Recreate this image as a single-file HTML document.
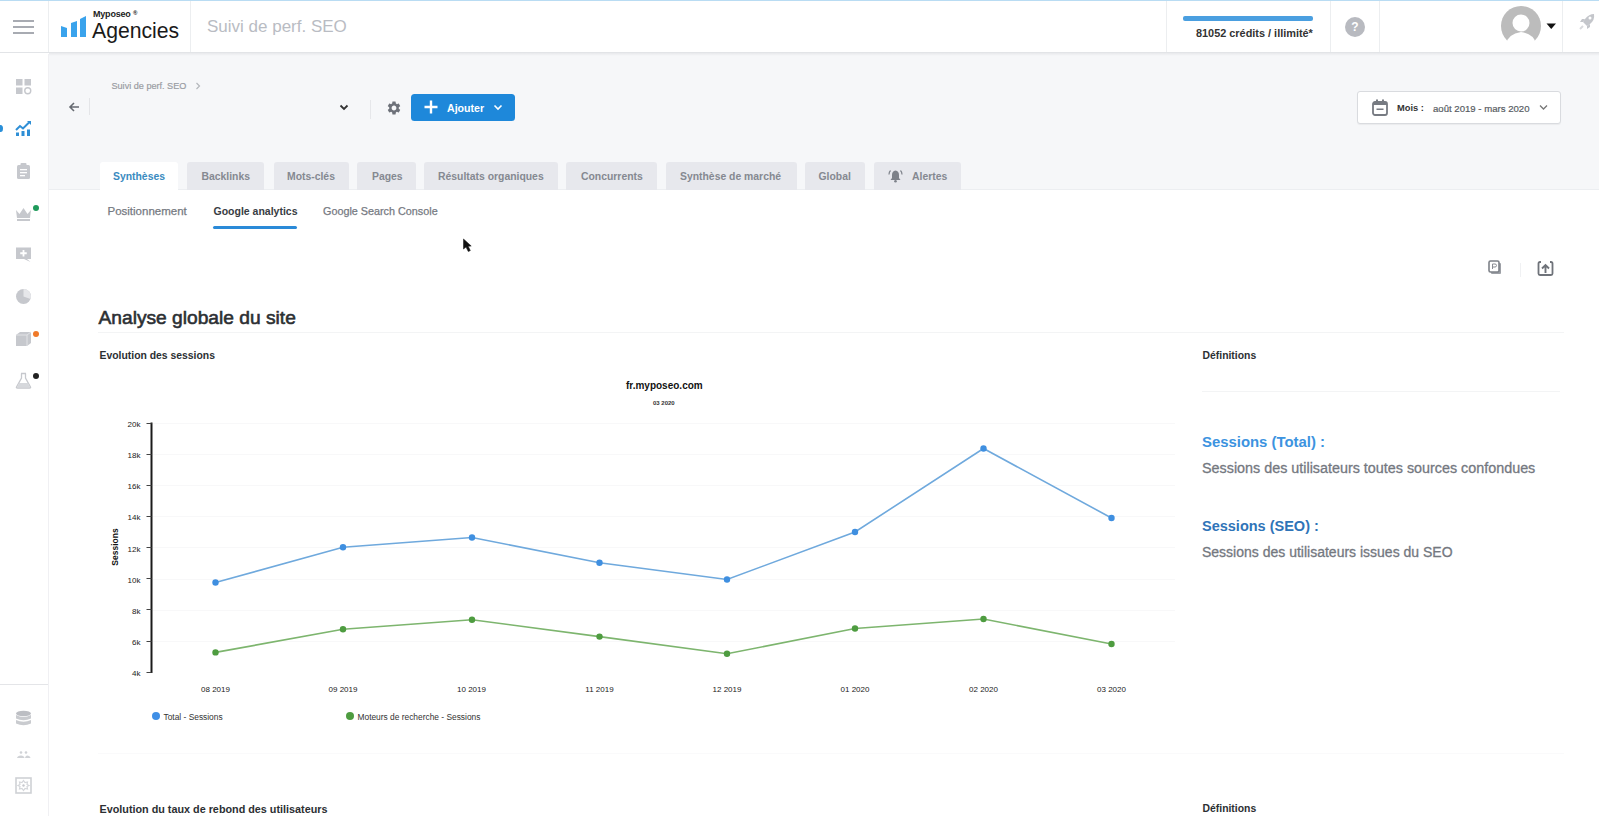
<!DOCTYPE html>
<html><head><meta charset="utf-8">
<style>
*{box-sizing:border-box;margin:0;padding:0}
html,body{width:1599px;height:816px;overflow:hidden;background:#fff;font-family:"Liberation Sans",sans-serif;color:#333}
.a{position:absolute}
.t{position:absolute;white-space:nowrap;line-height:1}
.b{font-weight:bold}
.vl{position:absolute;width:1px;background:#eceef0}
.tab{position:absolute;top:162px;height:28px;background:#e7e8ed;border-radius:3px 3px 0 0}
.tabt{position:absolute;top:172px;white-space:nowrap;line-height:1;font-size:10.4px;font-weight:bold;color:#858991}
.si{position:absolute;left:15px;width:17px;height:17px}
#wrap{position:absolute;left:0;top:0;width:1599px;height:816px;overflow:hidden}
</style></head><body><div id="wrap">
<!-- backgrounds -->
<div class="a" style="left:0;top:0;width:1599px;height:1px;background:#b9dcf3"></div>
<div class="a" style="left:0;top:1px;width:1599px;height:51px;background:#fff"></div>
<div class="a" style="left:0;top:52px;width:1599px;height:1px;background:#e2e4e7"></div>
<div class="a" style="left:0;top:54px;width:48px;height:762px;background:#fff"></div>
<div class="a" style="left:48px;top:54px;width:1px;height:762px;background:#f0f0f3"></div>
<div class="a" style="left:49px;top:54px;width:1550px;height:136px;background:#f6f7f9"></div>
<div class="a" style="left:49px;top:189px;width:1550px;height:1px;background:#eceef1"></div>
<div class="a" style="left:49px;top:53px;width:1550px;height:3px;background:linear-gradient(#e8e9ec,#f6f7f9)"></div>

<!-- header -->
<div class="a" style="left:13px;top:20px;width:21px;height:2px;background:#a8abb2"></div>
<div class="a" style="left:13px;top:26px;width:21px;height:2px;background:#a8abb2"></div>
<div class="a" style="left:13px;top:32px;width:21px;height:2px;background:#a8abb2"></div>
<div class="vl" style="left:48px;top:1px;height:51px"></div>
<div class="vl" style="left:190px;top:1px;height:51px"></div>
<svg class="a" style="left:60px;top:15px" width="28" height="23" viewBox="0 0 28 23">
<path d="M1 11 L7 13 L7 22 L1 22Z" fill="#3aa3ec"/>
<path d="M11 8 L17 6 L17 22 L11 22Z" fill="#3aa3ec"/>
<path d="M20 4 L26 1 L26 22 L20 22Z" fill="#3aa3ec"/>
</svg>
<div class="t" style="left:93px;top:10px;font-size:9px;color:#222;font-weight:bold;letter-spacing:-0.2px">Myposeo <span style="font-size:6px;vertical-align:top">®</span></div>
<div class="t" style="left:92px;top:19.5px;font-size:21.2px;color:#1a1a1a;letter-spacing:0px">Agencies</div>
<div class="t" style="left:207px;top:17.5px;font-size:17px;color:#b9bcc3">Suivi de perf. SEO</div>

<div class="vl" style="left:1166px;top:1px;height:51px"></div>
<div class="vl" style="left:1330px;top:1px;height:51px"></div>
<div class="vl" style="left:1379px;top:1px;height:51px"></div>
<div class="vl" style="left:1562px;top:1px;height:51px"></div>
<div class="a" style="left:1183px;top:16px;width:130px;height:4.5px;background:#4a9fe0;border-radius:2px"></div>
<div class="t b" style="left:1196px;top:28.3px;font-size:10.9px;color:#333">81052 crédits / illimité*</div>
<div class="a" style="left:1345px;top:16.5px;width:20px;height:20px;border-radius:50%;background:#b8bac0;color:#fff;font-size:12px;font-weight:bold;text-align:center;line-height:20px">?</div>
<svg class="a" style="left:1500px;top:6px" width="44" height="38" viewBox="0 0 44 38">
<defs><clipPath id="cc"><circle cx="21" cy="20" r="20"/></clipPath></defs>
<g clip-path="url(#cc)">
<rect x="0" y="0" width="44" height="35" fill="#bcbcbc"/>
<circle cx="21" cy="17" r="8.5" fill="#fff"/>
<path d="M6 38 Q8 28 21 26 Q34 28 36 38Z" fill="#fff"/>
</g>
</svg>
<svg class="a" style="left:1546px;top:23px" width="11" height="7" viewBox="0 0 11 7"><path d="M0.5 0.5 L10 0.5 L5.25 6Z" fill="#111"/></svg>
<svg class="a" style="left:1577px;top:12px" width="20" height="20" viewBox="0 0 20 20">
<path d="M17 2 Q12 2 8 7 L6 10 L10 14 L13 12 Q18 8 17 2Z" fill="#c4c6cb"/>
<path d="M6 10 L3 10 L5 7 L8 7Z M10 14 L10 17 L13 15 L13 12Z" fill="#c4c6cb"/>
<circle cx="13" cy="6" r="1.5" fill="#fff"/>
<path d="M3 17 L6 14" stroke="#d8dadd" stroke-width="2"/>
</svg>

<!-- sidebar icons -->
<div class="a" style="left:-2px;top:125px;width:5px;height:7px;border-radius:50%;background:#2a8fd8"></div>
<svg class="si" style="top:78px" viewBox="0 0 17 17"><rect x="1" y="1" width="6.5" height="6.5" fill="#c6c8cd"/><rect x="9.5" y="1" width="6.5" height="6.5" fill="#c6c8cd"/><rect x="1" y="9.5" width="6.5" height="6.5" fill="#c6c8cd"/><circle cx="12.75" cy="12.75" r="3" fill="none" stroke="#c6c8cd" stroke-width="1.4"/></svg>
<svg class="si" style="top:120px" viewBox="0 0 17 17"><path d="M1 10 L5 6 L8 8.5 L14 2.5" stroke="#2f8fd6" stroke-width="2" fill="none"/><path d="M12 1 L16 1 L16 5Z" fill="#2f8fd6"/><rect x="1" y="12.5" width="3" height="3.5" fill="#2f8fd6"/><rect x="6.5" y="11" width="3" height="5" fill="#2f8fd6"/><rect x="12" y="9.5" width="3" height="6.5" fill="#2f8fd6"/></svg>
<svg class="si" style="top:162px" viewBox="0 0 17 17"><rect x="2" y="3" width="13" height="14" rx="1.5" fill="#c6c8cd"/><rect x="5.5" y="1" width="6" height="4" rx="1" fill="#c6c8cd"/><rect x="5" y="7" width="7" height="1.3" fill="#fff"/><rect x="5" y="10" width="7" height="1.3" fill="#fff"/><rect x="5" y="13" width="5" height="1.3" fill="#fff"/></svg>
<svg class="si" style="top:205px" viewBox="0 0 17 17"><path d="M1 5 L4.5 9 L8.5 3 L12.5 9 L16 5 L15 13 L2 13Z" fill="#c6c8cd"/><rect x="2" y="14" width="13" height="2" fill="#c6c8cd"/></svg>
<div class="a" style="left:33px;top:204.5px;width:6px;height:6px;border-radius:50%;background:#1f9a5b"></div>
<svg class="si" style="top:246px" viewBox="0 0 17 17"><path d="M1 1.5 H16 V13 H12 L15.5 16 L9 13 H1Z" fill="#c6c8cd"/><path d="M8.5 4 V10.5 M5.25 7.25 H11.75" stroke="#fff" stroke-width="1.8"/></svg>
<svg class="si" style="top:288px" viewBox="0 0 17 17"><circle cx="8.5" cy="8.5" r="7.5" fill="#c6c8cd"/><path d="M8.5 8.5 L8.5 1 A7.5 7.5 0 0 1 15.5 11Z" fill="#e6e7ea"/></svg>
<svg class="si" style="top:330px" viewBox="0 0 17 17"><path d="M1 5 L5 2 L16 2 L16 13 L12 16 L1 16Z" fill="#c6c8cd"/><path d="M1 5 L12 5 L16 2 M12 5 V16" stroke="#e2e3e6" stroke-width="1" fill="none"/></svg>
<div class="a" style="left:33px;top:330.5px;width:6px;height:6px;border-radius:50%;background:#f07a2a"></div>
<svg class="si" style="top:372px" viewBox="0 0 17 17"><path d="M6 1.5 H11 M6.5 1.5 V6 L1.5 15 Q1 16 2.5 16 H14.5 Q16 16 15.5 15 L10.5 6 V1.5" stroke="#c6c8cd" stroke-width="1.3" fill="none"/><path d="M4 11 H13 L15 15 H2Z" fill="#d6d8dc"/></svg>
<div class="a" style="left:33px;top:373px;width:6px;height:6px;border-radius:50%;background:#222"></div>
<div class="a" style="left:0;top:684px;width:48px;height:1px;background:#e4e5e8"></div>
<svg class="si" style="top:710px" viewBox="0 0 17 17"><ellipse cx="8.5" cy="3.5" rx="7.5" ry="2.8" fill="#bcbec3"/><path d="M1 5 Q8.5 9 16 5 V8.5 Q8.5 12 1 8.5Z" fill="#c9cbcf"/><path d="M1 10 Q8.5 13.5 16 10 V13.5 Q8.5 17 1 13.5Z" fill="#c9cbcf"/></svg>
<svg class="si" style="top:746px" viewBox="0 0 17 14"><circle cx="6" cy="5" r="1.3" fill="#d0d2d6"/><circle cx="11" cy="5" r="1.3" fill="#d0d2d6"/><path d="M2 10.5 Q2.5 8 6 8 Q9 8 9.5 10.5Z M10 10.5 Q10.5 8 12 8 Q15 8 15.5 10.5Z" fill="#d0d2d6"/></svg>
<svg class="si" style="top:776.5px" viewBox="0 0 17 17"><rect x="1" y="1" width="15" height="15" fill="none" stroke="#cfd1d5" stroke-width="1.6"/><path d="M8.5 3.5 L10 5.5 L12.5 5 L12 7.5 L14 8.5 L12 9.5 L12.5 12 L10 11.5 L8.5 13.5 L7 11.5 L4.5 12 L5 9.5 L3 8.5 L5 7.5 L4.5 5 L7 5.5Z" fill="none" stroke="#d4d6da" stroke-width="1.2"/><circle cx="8.5" cy="8.5" r="1.2" fill="#c6c8cd"/></svg>

<!-- toolbar -->
<div class="t" style="left:111.5px;top:82.3px;font-size:9.1px;color:#9a9da3;-webkit-text-stroke:0.2px #9a9da3">Suivi de perf. SEO</div>
<svg class="a" style="left:195px;top:82px" width="6" height="8" viewBox="0 0 6 8"><path d="M1.5 1 L4.5 4 L1.5 7" stroke="#b4b7bc" stroke-width="1.2" fill="none"/></svg>
<svg class="a" style="left:68px;top:101px" width="12" height="12" viewBox="0 0 12 12"><path d="M11 6 H2 M6 2 L2 6 L6 10" stroke="#666a71" stroke-width="1.6" fill="none"/></svg>
<div class="a" style="left:89px;top:98px;width:1px;height:17px;background:#e4e5e8"></div>
<svg class="a" style="left:339px;top:104px" width="10" height="7" viewBox="0 0 10 7"><path d="M1.5 1.5 L5 5 L8.5 1.5" stroke="#333" stroke-width="1.8" fill="none"/></svg>
<div class="a" style="left:370px;top:100px;width:1px;height:19px;background:#e6e7ea"></div>
<svg class="a" style="left:385.5px;top:99.5px" width="16" height="16" viewBox="0 0 24 24"><path fill="#6d7179" d="M19.14 12.94c.04-.3.06-.61.06-.94 0-.32-.02-.64-.07-.94l2.03-1.58a.49.49 0 0 0 .12-.61l-1.92-3.32a.488.488 0 0 0-.59-.22l-2.39.96c-.5-.38-1.03-.7-1.62-.94l-.36-2.54a.484.484 0 0 0-.48-.41h-3.84c-.24 0-.43.17-.47.41l-.36 2.54c-.59.24-1.13.57-1.62.94l-2.39-.96c-.22-.08-.47 0-.59.22L2.74 8.87c-.12.21-.08.47.12.61l2.03 1.58c-.05.3-.09.63-.09.94s.02.64.07.94l-2.03 1.58a.49.49 0 0 0-.12.61l1.92 3.32c.12.22.37.29.59.22l2.39-.96c.5.38 1.03.7 1.62.94l.36 2.54c.05.24.24.41.48.41h3.84c.24 0 .44-.17.47-.41l.36-2.54c.59-.24 1.13-.56 1.62-.94l2.39.96c.22.08.47 0 .59-.22l1.92-3.32c.12-.22.07-.47-.12-.61l-2.01-1.58zM12 15.6c-1.98 0-3.6-1.62-3.6-3.6s1.62-3.6 3.6-3.6 3.6 1.62 3.6 3.6-1.62 3.6-3.6 3.6z"/></svg>
<div class="a" style="left:411px;top:93.5px;width:104px;height:27px;background:#1e88da;border-radius:3.5px"></div>
<svg class="a" style="left:424px;top:100px" width="14" height="14" viewBox="0 0 14 14"><path d="M7 0.5 V13.5 M0.5 7 H13.5" stroke="#fff" stroke-width="2.4"/></svg>
<div class="t b" style="left:447px;top:102.8px;font-size:10.6px;color:#fff">Ajouter</div>
<svg class="a" style="left:493px;top:104px" width="10" height="7" viewBox="0 0 10 7"><path d="M1.5 1.5 L5 5 L8.5 1.5" stroke="#fff" stroke-width="1.6" fill="none"/></svg>

<!-- date picker -->
<div class="a" style="left:1357px;top:91px;width:204px;height:33px;background:#fff;border:1px solid #d9dbdf;border-radius:3px;box-shadow:0 1px 1px rgba(0,0,0,.05)"></div>
<svg class="a" style="left:1372px;top:98.5px" width="16" height="17" viewBox="0 0 16 17"><rect x="1" y="3" width="14" height="13" rx="2" fill="none" stroke="#777b82" stroke-width="1.8"/><rect x="1" y="3" width="14" height="3" fill="#777b82"/><rect x="4" y="0.5" width="2" height="4" fill="#777b82"/><rect x="10" y="0.5" width="2" height="4" fill="#777b82"/><rect x="4.5" y="9.5" width="7" height="1.5" fill="#777b82"/></svg>
<div class="t b" style="left:1397px;top:104.2px;font-size:9.3px;color:#333">Mois :</div>
<div class="t" style="left:1433px;top:104.2px;font-size:9.6px;color:#585c63;-webkit-text-stroke:0.2px #585c63">août 2019 - mars 2020</div>
<svg class="a" style="left:1539px;top:104px" width="9" height="7" viewBox="0 0 9 7"><path d="M1 1.5 L4.5 5 L8 1.5" stroke="#777" stroke-width="1.3" fill="none"/></svg>

<!-- tabs -->
<div class="tab" style="left:100px;width:78px;background:#fff"></div>
<div class="tabt" style="left:113px;color:#3a8bbf">Synthèses</div>
<div class="tab" style="left:187px;width:77px"></div>
<div class="tabt" style="left:201.5px">Backlinks</div>
<div class="tab" style="left:273.5px;width:75px"></div>
<div class="tabt" style="left:287px">Mots-clés</div>
<div class="tab" style="left:357px;width:58.5px"></div>
<div class="tabt" style="left:372px">Pages</div>
<div class="tab" style="left:424px;width:134px"></div>
<div class="tabt" style="left:438px">Résultats organiques</div>
<div class="tab" style="left:566px;width:90.5px"></div>
<div class="tabt" style="left:581px">Concurrents</div>
<div class="tab" style="left:666px;width:130.5px"></div>
<div class="tabt" style="left:680px">Synthèse de marché</div>
<div class="tab" style="left:805px;width:60px"></div>
<div class="tabt" style="left:818.5px">Global</div>
<div class="tab" style="left:874px;width:87px"></div>
<svg class="a" style="left:888px;top:169px" width="15" height="14" viewBox="0 0 15 14"><path d="M7.5 1.5 Q4 2 4 6 V9 L2.5 11 H12.5 L11 9 V6 Q11 2 7.5 1.5Z" fill="#7d8189"/><circle cx="7.5" cy="12.3" r="1.3" fill="#7d8189"/><path d="M2.5 1.5 Q1 3 1 5.5 M12.5 1.5 Q14 3 14 5.5" stroke="#7d8189" stroke-width="1.2" fill="none"/></svg>
<div class="tabt" style="left:912px">Alertes</div>

<!-- subtabs -->
<div class="t" style="left:107.5px;top:205.5px;font-size:11.5px;color:#767a82;-webkit-text-stroke:0.25px #767a82">Positionnement</div>
<div class="t b" style="left:213.5px;top:205.5px;font-size:10.5px;color:#383c43">Google analytics</div>
<div class="t" style="left:323px;top:205.5px;font-size:10.8px;color:#767a82;-webkit-text-stroke:0.25px #767a82">Google Search Console</div>
<div class="a" style="left:213px;top:225.5px;width:84px;height:3.5px;background:#2a8ad8;border-radius:2px"></div>

<!-- cursor -->
<svg class="a" style="left:462px;top:237px" width="10" height="16" viewBox="0 0 10 16"><path d="M1.5 2 L1.5 12 L4 10 L6.3 14.5 L8.3 13.6 L6.2 9.3 L9.2 9Z" fill="#111" stroke="#222" stroke-width="0.6" stroke-linejoin="round"/></svg>

<!-- action icons -->
<svg class="a" style="left:1488px;top:260px" width="14" height="15" viewBox="0 0 14 15"><rect x="3" y="3" width="10" height="11" rx="1" fill="#9da0a6"/><rect x="1" y="1" width="10" height="11" rx="1.5" fill="#fff" stroke="#7d8188" stroke-width="1.6"/><path d="M4.5 9 V4 H7 Q8.5 4 8.5 5.5 Q8.5 7 7 7 H4.5" stroke="#8a8d93" stroke-width="1" fill="none"/></svg>
<div class="a" style="left:1520px;top:263px;width:1px;height:14px;background:#f0f1f3"></div>
<svg class="a" style="left:1537px;top:259.5px" width="17" height="17" viewBox="0 0 17 17"><path d="M4 2 H3 Q1.5 2 1.5 3.5 V13.5 Q1.5 15 3 15 H14 Q15.5 15 15.5 13.5 V3.5 Q15.5 2 14 2 H13" stroke="#6f737a" stroke-width="1.8" fill="none"/><path d="M8.5 13 V5.5 M5 8.5 L8.5 5 L12 8.5" stroke="#6f737a" stroke-width="1.9" fill="none"/></svg>

<!-- section title -->
<div class="t" style="left:98.5px;top:308.3px;font-size:19.2px;color:#2c2f33;-webkit-text-stroke:0.6px #2c2f33">Analyse globale du site</div>
<div class="a" style="left:98px;top:331.5px;width:1466px;height:1px;background:#f3f4f5"></div>

<div class="t b" style="left:99.5px;top:351px;font-size:10.4px;color:#2c2f33">Evolution des sessions</div>
<div class="t b" style="left:1202.5px;top:351px;font-size:10.4px;color:#2c2f33">Définitions</div>
<div class="a" style="left:1202px;top:390.5px;width:358px;height:1px;background:#f3f4f5"></div>

<!-- definitions -->
<div class="t b" style="left:1202px;top:434.7px;font-size:14.9px;color:#3c93e0">Sessions (Total) :</div>
<div class="t" style="left:1202px;top:461px;font-size:14.35px;color:#74787f;-webkit-text-stroke:0.3px #74787f">Sessions des utilisateurs toutes sources confondues</div>
<div class="t b" style="left:1202px;top:518.7px;font-size:14.5px;color:#2f74b8">Sessions (SEO) :</div>
<div class="t" style="left:1202px;top:545.2px;font-size:14px;color:#74787f;-webkit-text-stroke:0.3px #74787f">Sessions des utilisateurs issues du SEO</div>

<!-- chart -->
<div class="t b" style="left:626px;top:381px;font-size:10px;color:#111">fr.myposeo.com</div>
<div class="t b" style="left:653px;top:400.3px;font-size:6px;color:#333">03 2020</div>
<svg class="a" style="left:0;top:0" width="1599" height="816" viewBox="0 0 1599 816">
<g stroke="#f8f8f9" stroke-width="1">
<line x1="153" y1="423.5" x2="1175" y2="423.5"/>
<line x1="153" y1="454.5" x2="1175" y2="454.5"/>
<line x1="153" y1="485.5" x2="1175" y2="485.5"/>
<line x1="153" y1="516.5" x2="1175" y2="516.5"/>
<line x1="153" y1="547.5" x2="1175" y2="547.5"/>
<line x1="153" y1="579.5" x2="1175" y2="579.5"/>
<line x1="153" y1="610.5" x2="1175" y2="610.5"/>
<line x1="153" y1="641.5" x2="1175" y2="641.5"/>
</g>
<path d="M151.5 422.5 V673" stroke="#1a1a1a" stroke-width="2" fill="none"/><path d="M146.5 423.5 H151.5 M146.5 454.5 H151.5 M146.5 485.5 H151.5 M146.5 516.5 H151.5 M146.5 547.5 H151.5 M146.5 578.5 H151.5 M146.5 609.5 H151.5 M146.5 641.5 H151.5 M146.5 672.5 H151.5" stroke="#444" stroke-width="1.2" fill="none"/>
<polyline points="215.5,582.5 343,547.3 472,537.5 599.5,562.7 727,579.5 855,532 983.5,448.5 1111.5,518" fill="none" stroke="#6fa9dd" stroke-width="1.6"/>
<polyline points="215.5,652.4 343,629.3 472,619.8 599.5,636.6 727,653.8 855,628.5 983.5,619 1111.5,644" fill="none" stroke="#7db56e" stroke-width="1.6"/>
<g fill="#3f8fe0">
<circle cx="215.5" cy="582.5" r="3.2"/><circle cx="343" cy="547.3" r="3.2"/><circle cx="472" cy="537.5" r="3.2"/><circle cx="599.5" cy="562.7" r="3.2"/><circle cx="727" cy="579.5" r="3.2"/><circle cx="855" cy="532" r="3.2"/><circle cx="983.5" cy="448.5" r="3.2"/><circle cx="1111.5" cy="518" r="3.2"/>
</g>
<g fill="#4e9c40">
<circle cx="215.5" cy="652.4" r="3.2"/><circle cx="343" cy="629.3" r="3.2"/><circle cx="472" cy="619.8" r="3.2"/><circle cx="599.5" cy="636.6" r="3.2"/><circle cx="727" cy="653.8" r="3.2"/><circle cx="855" cy="628.5" r="3.2"/><circle cx="983.5" cy="619" r="3.2"/><circle cx="1111.5" cy="644" r="3.2"/>
</g>
<g font-family="Liberation Sans" font-size="8" fill="#222" text-anchor="end">
<text x="140.5" y="427">20k</text><text x="140.5" y="458">18k</text><text x="140.5" y="489">16k</text><text x="140.5" y="520">14k</text><text x="140.5" y="551.5">12k</text><text x="140.5" y="582.5">10k</text><text x="140.5" y="613.5">8k</text><text x="140.5" y="645">6k</text><text x="140.5" y="676">4k</text>
</g>
<g font-family="Liberation Sans" font-size="8" fill="#222" text-anchor="middle">
<text x="215.5" y="692">08 2019</text><text x="343" y="692">09 2019</text><text x="471.5" y="692">10 2019</text><text x="599.5" y="692">11 2019</text><text x="727" y="692">12 2019</text><text x="855" y="692">01 2020</text><text x="983.5" y="692">02 2020</text><text x="1111.5" y="692">03 2020</text>
</g>
<text transform="translate(117.5,547) rotate(-90)" font-family="Liberation Sans" font-size="8.5" font-weight="bold" fill="#111" text-anchor="middle">Sessions</text>
<circle cx="156" cy="716" r="4" fill="#3f8fe6"/>
<circle cx="350" cy="716" r="4" fill="#4e9c40"/>
<text x="163.5" y="719.5" font-family="Liberation Sans" font-size="8.4" fill="#333">Total - Sessions</text>
<text x="357.5" y="719.5" font-family="Liberation Sans" font-size="8.4" fill="#333">Moteurs de recherche - Sessions</text>
</svg>

<!-- bottom section -->
<div class="a" style="left:98px;top:753px;width:1466px;height:1px;background:#fafafb"></div>
<div class="t b" style="left:99.5px;top:804px;font-size:10.8px;color:#2c2f33">Evolution du taux de rebond des utilisateurs</div>
<div class="t b" style="left:1202.5px;top:804px;font-size:10.4px;color:#2c2f33">Définitions</div>
</div></body></html>
